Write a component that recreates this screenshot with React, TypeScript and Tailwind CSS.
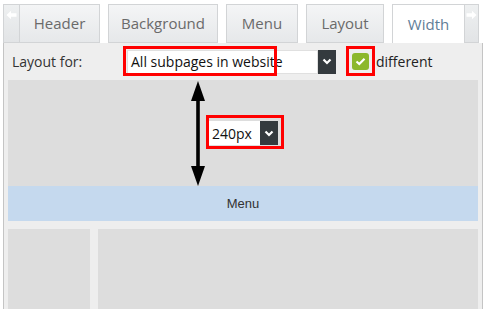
import React from "react";

const tabBase =
  "h-[39px] border border-[#d2d4d6] flex items-center justify-center text-[15px] bg-gradient-to-b from-[#f4f5f6] to-[#e6e8ea] text-[#6a6a6a]";

function Chevron() {
  return (
    <svg width="10" height="7" viewBox="0 0 10 7">
      <path d="M1.5 1.5 L5 5 L8.5 1.5" stroke="#fff" strokeWidth="2.2" fill="none" />
    </svg>
  );
}

export default function App() {
  return (
    <div
      className="w-[489px] h-[309px] bg-white relative overflow-hidden"
      style={{ fontFamily: '"Open Sans", sans-serif' }}
    >
      {/* tabs */}
      <div className="flex pl-[3px] pt-[4px] h-[43px]">
        <div className="w-[17px] h-[39px] border border-[#d2d4d6] bg-gradient-to-b from-[#eef0f1] to-[#e2e4e6] flex justify-center pt-[5px]">
          <svg width="11" height="10" viewBox="0 0 11 10">
            <path d="M0.5 5 L5 0.8 L5 3.3 L10.5 3.3 L10.5 6.7 L5 6.7 L5 9.2 Z" fill="#fff" />
          </svg>
        </div>
        <div className={`${tabBase} w-[80px] border-l-0`}>Header</div>
        <div className={`${tabBase} w-[110px] ml-[8px]`}>Background</div>
        <div className={`${tabBase} w-[72px] ml-[8px]`}>Menu</div>
        <div className={`${tabBase} w-[78px] ml-[8px]`}>Layout</div>
        <div className="h-[39px] w-[73px] ml-[8px] border border-[#d2d4d6] border-b-0 bg-white flex items-center justify-center text-[15px] text-[#5f7d97]">
          Width
        </div>
        <div className="w-[14px] h-[39px] border border-l-0 border-[#d2d4d6] bg-gradient-to-b from-[#eef0f1] to-[#e2e4e6] flex justify-center pt-[5px]">
          <svg width="11" height="10" viewBox="0 0 11 10">
            <path d="M10.5 5 L6 0.8 L6 3.3 L0.5 3.3 L0.5 6.7 L6 6.7 L6 9.2 Z" fill="#fff" />
          </svg>
        </div>
      </div>

      {/* panel */}
      <div className="ml-[3px] w-[480px] h-[266px] border-l border-r border-[#c4c4c4] bg-[#eeeeee] px-[4px] flex flex-col">
        <div className="h-[37px] flex items-center relative">
          <span className="ml-[4px] text-[14px] text-[#333] w-[115px]">Layout for:</span>
          <div className="flex h-[24px]">
            <div className="w-[191px] bg-white border border-[#e0e0e0] flex items-center pl-[3px] text-[14px] text-[#111]">
              All subpages in website
            </div>
            <div className="w-[18px] bg-[#343a3e] flex items-center justify-center">
              <Chevron />
            </div>
          </div>
          <div className="ml-[16px] w-[17px] h-[17px] rounded-[3px] bg-[#8cb82b] flex items-center justify-center">
            <svg width="11" height="9" viewBox="0 0 11 9">
              <path d="M1.5 4.5 L4.3 7 L9.5 1.8" stroke="#fff" strokeWidth="2.2" fill="none" />
            </svg>
          </div>
          <span className="ml-[7px] text-[14px] text-[#222]">different</span>
          {/* annotations */}
          <div className="absolute left-[115px] top-[3px] w-[154px] h-[30px] border-[3px] border-[#ff0000]" />
          <div className="absolute left-[338px] top-[3px] w-[29px] h-[30px] border-[3px] border-[#ff0000]" />
        </div>

        <div className="h-[106px] bg-[#dddddd] relative">
          <svg
            className="absolute left-[182px] top-[1px]"
            width="16"
            height="105"
            viewBox="0 0 16 105"
          >
            <path d="M8 0 L15 20 L1 20 Z" fill="#000" />
            <rect x="6.2" y="18" width="3.6" height="70" fill="#000" />
            <path d="M8 105 L15 85 L1 85 Z" fill="#000" />
          </svg>
          <div className="absolute left-[198px] top-[35px] w-[78px] h-[34px] border-[3px] border-[#ff0000]">
            <div className="flex h-[24px] mt-[3px]">
              <div className="w-[51px] bg-white flex items-center pl-[3px] text-[14px] text-[#111]">
                240px
              </div>
              <div className="w-[18px] bg-[#343a3e] flex items-center justify-center">
                <Chevron />
              </div>
            </div>
          </div>
        </div>

        <div
          className="h-[35px] bg-[#c5d9ee] flex items-center justify-center text-[13px] text-[#333]"
          style={{ fontFamily: '"Liberation Sans", sans-serif' }}
        >
          Menu
        </div>

        <div className="flex gap-[8px] mt-[8px] flex-1">
          <div className="w-[82px] bg-[#dddddd]" />
          <div className="flex-1 bg-[#dddddd]" />
        </div>
      </div>
    </div>
  );
}
